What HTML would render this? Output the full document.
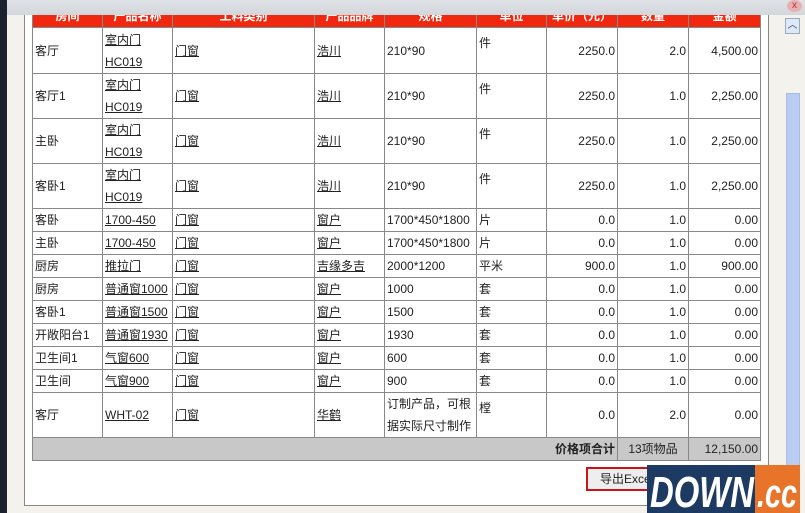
<!DOCTYPE html>
<html><head><meta charset="utf-8"><style>
*{margin:0;padding:0;box-sizing:border-box}
body{width:805px;height:513px;overflow:hidden;background:#f3f2ec;position:relative;font-family:"Liberation Sans","Noto Sans CJK SC",sans-serif;font-size:12px;color:#222}
.strip{position:absolute;left:0;top:0;width:7px;height:513px;background:#1c2130}
.top{position:absolute;left:7px;top:0;width:798px;height:15px;background:linear-gradient(#dfe3e8,#d3d7dc);z-index:2}
.panel{position:absolute;left:24px;top:14px;width:745px;height:492px;border:1px solid #888;background:#fff;overflow:hidden}
table{position:absolute;left:7px;top:-12px;border-collapse:collapse;table-layout:fixed}
td{border:1px solid #888;padding:0 2px;vertical-align:middle;line-height:22px;white-space:nowrap;overflow:hidden}
th{background:#f02810;color:#fff;height:24px;border:1px solid #888;font-size:12px}
u{color:#222}
.r{text-align:right}
.t{vertical-align:top}
.tot td{background:#c8c8c8}
.sb{position:absolute;left:785px;top:17px;width:16px;height:484px;background:#f3f2ec}
.up{position:absolute;left:785px;top:18px;width:15px;height:16px;border:1px solid #9ab;background:#dde9fb;color:#345;font-size:10px;text-align:center;line-height:14px}
.thumb{position:absolute;left:786px;top:93px;width:14px;height:400px;background:#b9cdf2;border:1px solid #a5bde8}
.btn{position:absolute;left:586px;top:467px;width:110px;height:24px;border:2px solid #c8141a;background:#eee;font-size:12px;line-height:20px;padding-left:12px}
.logo{position:absolute;left:647px;top:465px;width:153px;height:48px}
.close{position:absolute;left:787px;top:0;width:15px;height:12px;border-radius:50%;background:#e8b0b0;color:#a33;font-size:10px;text-align:center;line-height:12px;z-index:3}
</style></head><body>
<div class="strip"></div><div class="top"></div>
<div class="close">x</div>
<div class="panel">
<table>
<colgroup><col width="70"><col width="70"><col width="142"><col width="70"><col width="92"><col width="70"><col width="71"><col width="71"><col width="72"></colgroup>
<tr><th>房间</th><th>产品名称</th><th>工料类别</th><th>产品品牌</th><th>规格</th><th>单位</th><th>单价（元）</th><th>数量</th><th>金额</th></tr>
<tr style="height:46px"><td>客厅</td><td><u>室内门</u><br><u>HC019</u></td><td><u>门窗</u></td><td><u>浩川</u></td><td>210*90</td><td class="t" style="padding-top:8px;line-height:14px">件</td><td class="r">2250.0</td><td class="r">2.0</td><td class="r">4,500.00</td></tr>
<tr style="height:45px"><td>客厅1</td><td><u>室内门</u><br><u>HC019</u></td><td><u>门窗</u></td><td><u>浩川</u></td><td>210*90</td><td class="t" style="padding-top:8px;line-height:14px">件</td><td class="r">2250.0</td><td class="r">1.0</td><td class="r">2,250.00</td></tr>
<tr style="height:45px"><td>主卧</td><td><u>室内门</u><br><u>HC019</u></td><td><u>门窗</u></td><td><u>浩川</u></td><td>210*90</td><td class="t" style="padding-top:8px;line-height:14px">件</td><td class="r">2250.0</td><td class="r">1.0</td><td class="r">2,250.00</td></tr>
<tr style="height:45px"><td>客卧1</td><td><u>室内门</u><br><u>HC019</u></td><td><u>门窗</u></td><td><u>浩川</u></td><td>210*90</td><td class="t" style="padding-top:8px;line-height:14px">件</td><td class="r">2250.0</td><td class="r">1.0</td><td class="r">2,250.00</td></tr>
<tr style="height:23px"><td>客卧</td><td><u>1700-450</u></td><td><u>门窗</u></td><td><u>窗户</u></td><td>1700*450*1800</td><td>片</td><td class="r">0.0</td><td class="r">1.0</td><td class="r">0.00</td></tr>
<tr style="height:22px"><td>主卧</td><td><u>1700-450</u></td><td><u>门窗</u></td><td><u>窗户</u></td><td>1700*450*1800</td><td>片</td><td class="r">0.0</td><td class="r">1.0</td><td class="r">0.00</td></tr>
<tr style="height:23px"><td>厨房</td><td><u>推拉门</u></td><td><u>门窗</u></td><td><u>吉缘多吉</u></td><td>2000*1200</td><td>平米</td><td class="r">900.0</td><td class="r">1.0</td><td class="r">900.00</td></tr>
<tr style="height:23px"><td>厨房</td><td><u>普通窗1000</u></td><td><u>门窗</u></td><td><u>窗户</u></td><td>1000</td><td>套</td><td class="r">0.0</td><td class="r">1.0</td><td class="r">0.00</td></tr>
<tr style="height:23px"><td>客卧1</td><td><u>普通窗1500</u></td><td><u>门窗</u></td><td><u>窗户</u></td><td>1500</td><td>套</td><td class="r">0.0</td><td class="r">1.0</td><td class="r">0.00</td></tr>
<tr style="height:23px"><td>开敞阳台1</td><td><u>普通窗1930</u></td><td><u>门窗</u></td><td><u>窗户</u></td><td>1930</td><td>套</td><td class="r">0.0</td><td class="r">1.0</td><td class="r">0.00</td></tr>
<tr style="height:23px"><td>卫生间1</td><td><u>气窗600</u></td><td><u>门窗</u></td><td><u>窗户</u></td><td>600</td><td>套</td><td class="r">0.0</td><td class="r">1.0</td><td class="r">0.00</td></tr>
<tr style="height:23px"><td>卫生间</td><td><u>气窗900</u></td><td><u>门窗</u></td><td><u>窗户</u></td><td>900</td><td>套</td><td class="r">0.0</td><td class="r">1.0</td><td class="r">0.00</td></tr>
<tr style="height:45px"><td>客厅</td><td><u>WHT-02</u></td><td><u>门窗</u></td><td><u>华鹤</u></td><td>订制产品，可根<br>据实际尺寸制作</td><td class="t" style="padding-top:8px;line-height:14px">樘</td><td class="r">0.0</td><td class="r">2.0</td><td class="r">0.00</td></tr>
<tr class="tot" style="height:23px"><td colspan="7" class="r"><b>价格项合计</b></td><td style="text-align:center">13项物品</td><td class="r">12,150.00</td></tr>
</table>
</div>
<div class="sb"></div><div class="up">︿</div><div class="thumb"></div>
<div class="btn">导出Excel</div>
<svg class="logo" viewBox="0 0 153 48">
<rect x="0" y="0" width="108" height="48" fill="#1d3a63"/>
<rect x="108" y="0" width="45" height="48" fill="#e8742a"/>
<text x="3" y="42" font-family="Liberation Sans" font-weight="bold" font-style="italic" font-size="44" fill="#fff" textLength="104" lengthAdjust="spacingAndGlyphs">DOWN</text>
<text x="110" y="42" font-family="Liberation Sans" font-weight="bold" font-style="italic" font-size="40" fill="#fff" textLength="40" lengthAdjust="spacingAndGlyphs">.cc</text>
</svg>
</body></html>
